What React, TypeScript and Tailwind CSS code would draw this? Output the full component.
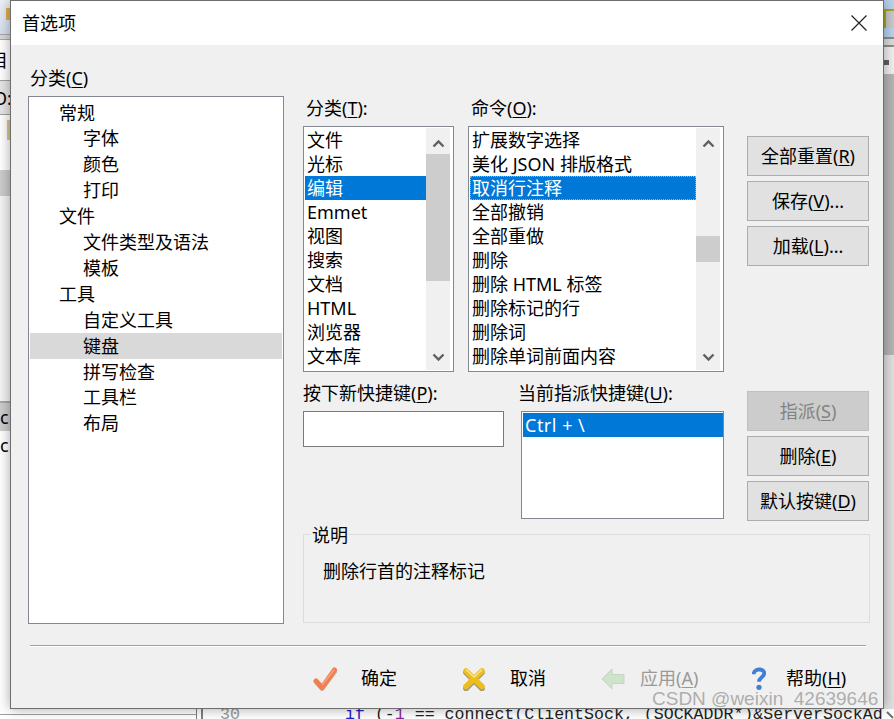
const treeItems = [
  { label: "常规", depth: 0 },
  { label: "字体", depth: 1 },
  { label: "颜色", depth: 1 },
  { label: "打印", depth: 1 },
  { label: "文件", depth: 0 },
  { label: "文件类型及语法", depth: 1 },
  { label: "模板", depth: 1 },
  { label: "工具", depth: 0 },
  { label: "自定义工具", depth: 1 },
  { label: "键盘", depth: 1, active: true },
  { label: "拼写检查", depth: 1 },
  { label: "工具栏", depth: 1 },
  { label: "布局", depth: 1 },
];

const categories = ["文件", "光标", "编辑", "Emmet", "视图", "搜索", "文档", "HTML", "浏览器", "文本库"];

const commands = [
  "扩展数字选择",
  "美化 JSON 排版格式",
  "取消行注释",
  "全部撤销",
  "全部重做",
  "删除",
  "删除 HTML 标签",
  "删除标记的行",
  "删除词",
  "删除单词前面内容",
];

function Mnemonic({ before, letter, after }: { before: string; letter: string; after: string }) {
  return (
    <span>
      {before}
      <u className="underline-offset-2">{letter}</u>
      {after}
    </span>
  );
}

function Chevron({ down }: { down?: boolean }) {
  return (
    <svg width="13" height="9" viewBox="0 0 13 9" className={down ? "rotate-180" : ""}>
      <path d="M1.5 7.5 L6.5 2.5 L11.5 7.5" fill="none" stroke="#606060" strokeWidth="2.4" />
    </svg>
  );
}

function Scrollbar({ thumbTop, thumbHeight }: { thumbTop: string; thumbHeight: string }) {
  return (
    <div className="w-6 h-full bg-[#f0f0f0] flex flex-col items-center">
      <div className="h-[26px] pt-[4px] shrink-0 flex items-center justify-center w-full">
        <Chevron />
      </div>
      <div className="flex-1 w-full">
        <div className={`${thumbTop} ${thumbHeight} w-full bg-[#cdcdcd]`} />
      </div>
      <div className="h-[25px] shrink-0 flex items-center justify-center w-full">
        <Chevron down />
      </div>
    </div>
  );
}

function WinButton({ children, disabled }: { children: React.ReactNode; disabled?: boolean }) {
  return (
    <button
      className={
        disabled
          ? "w-[122px] h-10 border border-[#bfbfbf] bg-[#cccccc] text-[#838383] flex items-center justify-center"
          : "w-[122px] h-10 border border-[#adadad] bg-[#e1e1e1] flex items-center justify-center"
      }
    >
      {children}
    </button>
  );
}

function OkIcon() {
  return (
    <svg width="24" height="24" viewBox="0 0 24 24">
      <path d="M3.5 15 L9 21.5 L22 4" fill="none" stroke="#c9b5a8" strokeWidth="5" strokeLinejoin="round" strokeLinecap="round" />
      <path d="M3 14 L9 20.5 L21.5 3" fill="none" stroke="#ee7f50" strokeWidth="5" strokeLinejoin="round" strokeLinecap="round" />
      <path d="M9.5 17.5 L21 3" fill="none" stroke="#f6a583" strokeWidth="1.3" strokeLinecap="round" />
    </svg>
  );
}

function CancelIcon() {
  return (
    <svg width="24" height="24" viewBox="0 0 24 24">
      <path d="M4 5.5 L20 21.5 M20 5.5 L4 21.5" fill="none" stroke="#a09a80" strokeWidth="5.6" strokeLinecap="round" />
      <path d="M4 4 L20 19.5 M20 4 L4 19.5" fill="none" stroke="#eebd1e" strokeWidth="5.6" strokeLinecap="round" />
      <path d="M4.5 3 L12 10 M19.5 3 L12 10" fill="none" stroke="#fbe58c" strokeWidth="1.6" strokeLinecap="round" />
    </svg>
  );
}

function ApplyIcon() {
  return (
    <svg width="24" height="22" viewBox="0 0 24 22">
      <path d="M1 11 L11 1 L11 6.5 L23 6.5 L23 15.5 L11 15.5 L11 21 Z" fill="#cfe3cc" stroke="#c2d6c0" strokeWidth="1" strokeLinejoin="round" />
    </svg>
  );
}

function HelpIcon() {
  return (
    <svg width="14" height="26" viewBox="0 0 16 26">
      <path d="M2 7.5 C2 0.5 14 0.5 14 6.5 C14 11 8 11 8 16" fill="none" stroke="#3f7fd6" strokeWidth="4.4" />
      <circle cx="8" cy="22.5" r="3" fill="#3f7fd6" />
    </svg>
  );
}

function LeftStrip() {
  return (
    <div className="w-2.5 shrink-0 h-full flex flex-col overflow-hidden text-[18px] leading-none whitespace-nowrap">
      <div className="h-[34px] bg-gradient-to-b from-[#eef1f8] to-[#d5def0] pt-2 pl-[6px]">
        <div className="w-1 h-3 bg-[#e0b050]" />
      </div>
      <div className="h-[6px] bg-[#d8d8d8] border-y border-[#a8a8a8]" />
      <div className="h-10 bg-white flex items-center text-black -ml-[10px]">目</div>
      <div className="h-[35px] bg-[#e5e5e5] border-y border-[#a0a0a0] flex items-center text-black -ml-[7px] pl-0">O:</div>
      <div className="h-[55px] bg-white pt-[5px] pl-[7px]">
        <div className="w-[3px] h-5 bg-[#d8c88a]" />
      </div>
      <div className="h-[26px] bg-[#cccccc]" />
      <div className="h-[205px] bg-[#f4f4f4]" />
      <div className="h-[2px] bg-[#a8a8a8]" />
      <div className="h-[28px] bg-[#cccccc] flex items-center text-black">c|</div>
      <div className="h-[28px] bg-white flex items-center text-black">c|</div>
      <div className="flex-1 bg-white" />
    </div>
  );
}

function RightStrip() {
  return (
    <div className="w-2.5 shrink-0 h-full flex flex-col overflow-hidden">
      <div className="h-[37px] bg-[#b8d3ee] pt-[9px]">
        <div className="w-2.5 h-[19px] bg-[#c9c9c9] border-t-2 border-l-2 border-[#a6a620]" />
      </div>
      <div className="h-[10px] bg-[#dcdcdc] border-y-2 border-[#8c8c8c]" />
      <div className="h-[27px] bg-[#f0f0f0] pt-[13px]">
        <div className="w-[5px] h-[5px] bg-[#606060]" />
      </div>
      <div className="h-[281px] bg-[#b5b5b5]" />
      <div className="flex-1 bg-[#e0e0e0]" />
    </div>
  );
}

export default function App() {
  return (
    <div className="relative w-[894px] h-[719px] overflow-hidden bg-white text-black text-[18px] font-['Noto_Sans','Noto_Sans_CJK_SC',sans-serif]">
      <div className="h-[709px] flex">
        <LeftStrip />
        <div className="relative z-10 w-[874px] shrink-0 h-full border border-[#6e6e6e] bg-[#f0f0f0] flex flex-col shadow-[0_0_12px_rgba(0,0,0,0.35)]">
          <div className="h-11 shrink-0 bg-white flex items-center justify-between pl-[11px] pr-4">
            <span>首选项</span>
            <svg width="16" height="16" viewBox="0 0 16 16">
              <path d="M0.5 0.5 L15.5 15.5 M15.5 0.5 L0.5 15.5" stroke="#222" strokeWidth="1.2" />
            </svg>
          </div>

          <div className="flex pl-[17px]">
            <div className="w-[256px] shrink-0 pt-[21px]">
              <div className="h-[30px] pl-[2px] leading-6">
                <Mnemonic before="分类(" letter="C" after=")" />
              </div>
              <div className="h-[528px] border border-[#828790] bg-white pt-[2.5px] pl-px pr-px">
                {treeItems.map((item) => (
                  <div
                    key={item.label}
                    className={`h-[25.92px] leading-[26px] ${item.depth ? "pl-[53px]" : "pl-[29px]"} ${item.active ? "bg-[#d9d9d9]" : ""}`}
                  >
                    {item.label}
                  </div>
                ))}
              </div>
            </div>

            <div className="ml-[19px] w-[567px] pt-[51px]">
              <div className="flex">
                <div className="w-[421px] shrink-0">
                  <div className="flex gap-[14px]">
                    <div className="w-[151px]">
                      <div className="h-[30px] leading-6 pl-[3px]">
                        <Mnemonic before="分类(" letter="T" after="):" />
                      </div>
                      <div className="h-[246px] border border-[#828790] bg-white p-px flex leading-6">
                        <div className="flex-1 min-w-0">
                          {categories.map((c) => (
                            <div key={c} className={`h-6 pl-[2px] ${c === "编辑" ? "bg-[#0078d7] text-white" : ""}`}>
                              {c}
                            </div>
                          ))}
                        </div>
                        <div className="h-full mr-[2px]">
                          <Scrollbar thumbTop="mt-0" thumbHeight="h-[127px]" />
                        </div>
                      </div>
                    </div>
                    <div className="w-[256px]">
                      <div className="h-[30px] leading-6 pl-[3px]">
                        <Mnemonic before="命令(" letter="O" after="):" />
                      </div>
                      <div className="h-[246px] border border-[#828790] bg-white p-px flex leading-6">
                        <div className="flex-1 min-w-0 whitespace-nowrap">
                          {commands.map((c) => (
                            <div
                              key={c}
                              className={`h-6 pl-[2px] ${c === "取消行注释" ? "bg-[#0078d7] text-white outline-1 -outline-offset-1 outline-dotted outline-[#e8a060]" : ""}`}
                            >
                              {c}
                            </div>
                          ))}
                        </div>
                        <div className="h-full mr-[2px]">
                          <Scrollbar thumbTop="mt-[82px]" thumbHeight="h-[26px]" />
                        </div>
                      </div>
                    </div>
                  </div>

                  <div className="flex mt-[9px]">
                    <div className="w-[201px] shrink-0">
                      <div className="h-[30px] leading-6">
                        <Mnemonic before="按下新快捷键(" letter="P" after="):" />
                      </div>
                      <div className="h-9 border border-[#7a7a7a] bg-white" />
                    </div>
                    <div className="ml-[17px] w-[204px]">
                      <div className="h-[30px] leading-6 -ml-[3px]">
                        <Mnemonic before="当前指派快捷键(" letter="U" after="):" />
                      </div>
                      <div className="h-[108px] border border-[#828790] bg-white pt-px pl-px leading-6">
                        <div className="h-6 bg-[#0078d7] text-white pl-[2px] tracking-[0.5px]">Ctrl + \</div>
                      </div>
                    </div>
                  </div>
                </div>

                <div className="ml-[23px] w-[122px] shrink-0 pt-[40px] flex flex-col">
                  <div className="flex flex-col gap-[5px]">
                    <WinButton><Mnemonic before="全部重置(" letter="R" after=")" /></WinButton>
                    <WinButton><Mnemonic before="保存(" letter="V" after=")..." /></WinButton>
                    <WinButton><Mnemonic before="加载(" letter="L" after=")..." /></WinButton>
                  </div>
                  <div className="flex flex-col gap-[5px] mt-[125px]">
                    <WinButton disabled><Mnemonic before="指派(" letter="S" after=")" /></WinButton>
                    <WinButton><Mnemonic before="删除(" letter="E" after=")" /></WinButton>
                    <WinButton><Mnemonic before="默认按键(" letter="D" after=")" /></WinButton>
                  </div>
                </div>
              </div>

              <div className="relative mt-[13px] h-[89px] border border-[#dcdcdc] pl-[19px] pt-6 leading-6">
                <span className="absolute left-[7px] -top-[12px] bg-[#f0f0f0] px-px">说明</span>
                删除行首的注释标记
              </div>
            </div>
          </div>

          <div className="ml-[19px] mr-[17px] mt-[21px] h-[2px] border-t border-[#a0a0a0] bg-white" />

          <div className="flex-1 flex items-center pl-[302px] pt-[2px]">
            <div className="w-[149px] flex items-center gap-6 shrink-0">
              <OkIcon />
              <span>确定</span>
            </div>
            <div className="w-[139px] flex items-center gap-6 shrink-0">
              <CancelIcon />
              <span>取消</span>
            </div>
            <div className="w-[151px] flex items-center gap-[15px] shrink-0 text-[#9a9a9a]">
              <ApplyIcon />
              <Mnemonic before="应用(" letter="A" after=")" />
            </div>
            <div className="flex items-center gap-5 shrink-0">
              <HelpIcon />
              <Mnemonic before="帮助(" letter="H" after=")" />
            </div>
          </div>
        </div>
        <RightStrip />
      </div>

      <div className="h-2.5 bg-white flex overflow-hidden whitespace-nowrap font-['Liberation_Mono',monospace] text-[16.6px] leading-[12px]">
        <div className="w-[197px] shrink-0 border-r border-[#808080]">
          <div className="h-[6px] border-b border-[#a0a0a0]" />
        </div>
        <div className="w-[6px] shrink-0 border-r-2 border-[#808080]" />
        <span className="ml-[17px] w-[125px] shrink-0 text-[#9a9a9a]">30</span>
        <div className="flex-1 min-w-0 overflow-hidden text-[#222]">
          <span className="text-[#2020c0]">if</span> (-<span className="text-[#8a2a9a]">1</span> == connect(ClientSock, (SOCKADDR*)&amp;ServerSockAd
        </div>
        <div className="w-[10px] shrink-0 flex justify-end pt-[2px]">
          <svg width="8" height="8" viewBox="0 0 8 8">
            <path d="M1 1 L7 7" stroke="#707070" strokeWidth="2" />
          </svg>
        </div>
      </div>

      <div className="absolute z-20 left-[652px] top-[689px] text-[19px] leading-5 text-[#8f8f8f]/70 whitespace-nowrap font-['Liberation_Sans',sans-serif]">
        CSDN @weixin_42639646
      </div>
    </div>
  );
}
